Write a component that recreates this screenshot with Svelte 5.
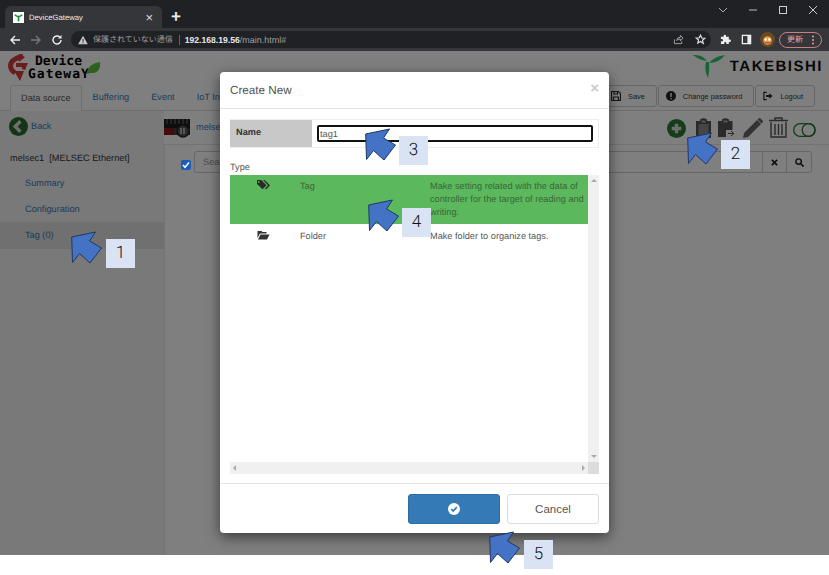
<script>
  const callouts = [
    { n: 1, ax: 71, ay: 231, bx: 106, by: 239 },
    { n: 2, ax: 687, ay: 132, bx: 721, by: 140 },
    { n: 3, ax: 365, ay: 128, bx: 399, by: 136 },
    { n: 4, ax: 368, ay: 199, bx: 402, by: 208 },
    { n: 5, ax: 489, ay: 531, bx: 524, by: 540 }
  ];
  const tabs = ['Buffering', 'Event', 'IoT In'];
</script>

<div class="app">
  <!-- browser chrome -->
  <div class="titlebar">
    <div class="tab">
      <svg class="favicon" viewBox="0 0 12 12"><rect width="12" height="12" fill="#fff" /><path d="M2 3q2 2 4 2t4-2M6 5v5" stroke="#1d8a3c" stroke-width="1.8" fill="none" /></svg>
      <span class="tab-title">DeviceGateway</span>
      <span class="tab-close">×</span>
    </div>
    <span class="newtab">+</span>
    <div class="winctl">
      <svg viewBox="0 0 10 10"><path d="M1 3l4 4 4-4" stroke="#aaa" fill="none" /></svg>
      <svg viewBox="0 0 10 10"><path d="M1 5h8" stroke="#bbb" fill="none" /></svg>
      <svg viewBox="0 0 10 10"><rect x="1.5" y="1.5" width="7" height="7" stroke="#ccc" fill="none" /></svg>
      <svg viewBox="0 0 10 10"><path d="M1 1l8 8M9 1l-8 8" stroke="#ccc" fill="none" /></svg>
    </div>
  </div>
  <div class="toolbar">
    <svg class="nav" viewBox="0 0 12 12"><path d="M11 6H2M6 2L2 6l4 4" stroke="#eee" stroke-width="1.4" fill="none" /></svg>
    <svg class="nav" viewBox="0 0 12 12"><path d="M1 6h9M6 2l4 4-4 4" stroke="#777" stroke-width="1.4" fill="none" /></svg>
    <svg class="nav" viewBox="0 0 12 12"><path d="M10 6a4 4 0 1 1-1.2-2.9" stroke="#eee" stroke-width="1.4" fill="none" /><path d="M10.5 1v3.4H7z" fill="#eee" /></svg>
    <div class="omnibox">
      <svg class="warn" viewBox="0 0 10 10"><path d="M5 .8L9.800 9.200H.2z" fill="#c4c7c5" /><path d="M5 4v2.600M5 7.200v1" stroke="#2a2b2e" /></svg>
      <span class="insecure">保護されていない通信</span>
      <span class="sep"></span>
      <span class="url"><b>192.168.19.56</b>/main.html#</span>
      <svg class="omni-ico share" viewBox="0 0 12 12"><path d="M1.500 6v4.500h8V8M4 7q.5-3.500 4-3.500V1.500l3 3-3 3V5.600Q5.500 5.500 4 7z" stroke="#aaa" fill="none" /></svg>
      <svg class="omni-ico star" viewBox="0 0 12 12"><path d="M6 1.300l1.400 3.100 3.300.3-2.500 2.200.8 3.300L6 8.200 3 9.900l.8-3.300-2.500-2.200 3.300-.3z" stroke="#ddd" stroke-width="1.300" fill="none" /></svg>
    </div>
    <svg class="tool-ico puzzle" viewBox="0 0 12 12"><path d="M1 3h3V2a1.300 1.300 0 0 1 2.600 0v1h3v3h1a1.300 1.300 0 0 1 0 2.600h-1V11H7V10a1.200 1.200 0 0 0-2.400 0v1H1V8h1a1.300 1.300 0 0 0 0-2.600H1z" fill="#eee" /></svg>
    <svg class="tool-ico panel-ico" viewBox="0 0 12 12"><rect x="1.500" y="1.500" width="9" height="9" fill="none" stroke="#eee" stroke-width="1.400" /><rect x="7" y="1.500" width="3.500" height="9" fill="#eee" /></svg>
    <svg class="avatar" viewBox="0 0 16 16"><circle cx="8" cy="8" r="8" fill="#6b4a22" /><circle cx="8" cy="9" r="4.500" fill="#e0a050" /><circle cx="6" cy="8" r="1.300" fill="#fff" /><circle cx="10" cy="8" r="1.300" fill="#fff" /><path d="M5 11.500h6" stroke="#a33" /></svg>
    <div class="update"><span>更新</span><i></i></div>
  </div>

  <!-- device gateway page -->
  <div class="page">
    <div class="brand">
      <div class="dg-logo">
        <svg class="dg-mark" viewBox="0 0 22 27">
          <path d="M16 2Q4 5 3.500 11.500Q3.500 16 8 19" stroke="#d43a3a" stroke-width="5" fill="none" />
          <path d="M12 0l6 3-6 5zM9 9h12l-3 7-3-1v-2H9zM7 17h10l-4 10z" fill="#d43a3a" />
        </svg>
        <div class="dg-text"><span>Device</span><span class="gw">GatewaY</span></div>
        <svg class="dg-leaf" viewBox="0 0 14 13"><path d="M0 12Q0 2 13 0Q14 12 3 11z" fill="#5cc23a" /></svg>
      </div>
      <div class="tk-logo">
        <svg class="tk-mark" viewBox="0 0 33 25">
          <path d="M0 1Q9 0 14 7Q6 6 0 1zM32 1Q22 2 16 9Q26 9 32 1zM13 8Q11 16 15 24Q17 16 16 8z" fill="#28c868" />
        </svg>
        <span>TAKEBISHI</span>
      </div>
    </div>

    <div class="tabrow">
      <span class="navtab active">Data source</span>
      {#each tabs as t}
        <span class="navtab">{t}</span>
      {/each}
      <div class="actions">
        <button class="act">
          <svg viewBox="0 0 10 10"><path d="M.5.500h7l2 2v7h-9zM3 .500V3h3.500V.500M2.500 9.500V6h5v3.500" fill="none" stroke="#333" stroke-width="1.200" /></svg>
          Save
        </button>
        <button class="act">
          <svg viewBox="0 0 10 10"><circle cx="5" cy="5" r="5" fill="#222" /><path d="M5 2v4M5 7v1.200" stroke="#fff" stroke-width="1.400" /></svg>
          Change password
        </button>
        <button class="act">
          <svg viewBox="0 0 11 10"><path d="M4 1H1v8h3" fill="none" stroke="#222" stroke-width="1.300" /><path d="M3.500 4h3.500V2l3.500 3L7 8V6H3.500z" fill="#222" /></svg>
          Logout
        </button>
      </div>
    </div>

    <div class="main">
      <aside class="sidebar">
        <div class="back">
          <svg viewBox="0 0 20 20"><circle cx="10" cy="10" r="10" fill="#2a6b2e" /><path d="M12 4.500L6.500 10l5.500 5.500" stroke="#ddd" stroke-width="3.500" fill="none" /></svg>
          <span>Back</span>
        </div>
        <div class="device">melsec1&nbsp; [MELSEC Ethernet]</div>
        <div class="side-item">Summary</div>
        <div class="side-item">Configuration</div>
        <div class="side-item current">Tag (0)</div>
      </aside>
      <section class="content">
        <div class="crumb">
          <svg class="plc" viewBox="0 0 27 20"><rect y="1" width="26" height="9" fill="#1c1c1c" /><rect y="10" width="26" height="7" fill="#444" /><rect y="10" width="10" height="7" fill="#8a1616" /><path d="M3 1v5M7 1v5M11 1v5M15 1v5M19 1v5M23 1v5" stroke="#777" /><circle cx="19" cy="13" r="6" fill="#555" stroke="#222" stroke-width="1.500" /><path d="M17 10v6M20 10v6" stroke="#ccc" stroke-width="1.500" /></svg>
          <span class="crumb-name">melsec1</span>
          <div class="ops">
            <svg class="op-plus" viewBox="0 0 20 20"><circle cx="10" cy="10" r="10" fill="#2a7a34" /><path d="M10 5v10M5 10h10" stroke="#ddd" stroke-width="3.500" /></svg>
            <svg class="op-clip" viewBox="0 0 15 20"><path d="M0 3h4V1.500Q7.500-1 11 1.500V3h4v17H0z" fill="#555" /><path d="M2.500 6h10v11h-10z" fill="#8a8a8a" /><path d="M5.500 2.500h4v2h-4z" fill="#aaa" /></svg>
            <svg class="op-clip2" viewBox="0 0 18 20"><path d="M0 3h4V1.500Q7.500-1 11 1.500V3h3.500v9H8v7H0z" fill="#555" /><path d="M5.500 2.500h4v2h-4z" fill="#aaa" /><path d="M10 15.500h5M13 13l3 2.500-3 2.500" stroke="#555" fill="none" /></svg>
            <svg class="op-pen" viewBox="0 0 20 20"><path d="M0 20l1-5L14 2l4 4L5 19zM15.500 .5q1-1 2 0l2 2q1 1 0 2l-1 1-4-4z" fill="#666" /></svg>
            <svg class="op-trash" viewBox="0 0 19 21"><path d="M6 3V1h7v2M0 3.500h19M2 5v15h15V5M6 7v11M9.500 7v11M13 7v11" fill="none" stroke="#555" stroke-width="1.400" /></svg>
            <svg class="op-toggle" viewBox="0 0 23 14"><rect x=".7" y=".7" width="21.600" height="12.600" rx="6.300" fill="none" stroke="#2a7a34" stroke-width="1.300" /><circle cx="15.500" cy="7" r="6.300" fill="none" stroke="#2a7a34" stroke-width="1.300" /></svg>
          </div>
        </div>
        <div class="panel">
          <span class="check"><svg viewBox="0 0 10 10"><path d="M2 5l2 2.300L8 2.500" stroke="#fff" stroke-width="1.500" fill="none" /></svg></span>
          <div class="search">
            <span class="search-field">Search</span>
            <span class="search-btn"><svg viewBox="0 0 8 8"><path d="M1 1l6 6M7 1L1 7" stroke="#222" stroke-width="2" /></svg></span>
            <span class="search-btn wide"><svg viewBox="0 0 10 10"><circle cx="4" cy="4" r="3" fill="none" stroke="#222" stroke-width="1.600" /><path d="M6.500 6.500L9.500 9.500" stroke="#222" stroke-width="1.800" /></svg></span>
          </div>
        </div>
      </section>
    </div>

    <div class="backdrop"></div>

    <div class="modal">
      <header class="modal-head">
        <h4>Create New</h4>
        <span class="close">×</span>
      </header>
      <div class="modal-body">
        <div class="name-row">
          <label for="tagname">Name</label>
          <div class="name-cell"><input id="tagname" value="tag1" /></div>
        </div>
        <div class="type-label">Type</div>
        <div class="type-box">
          <div class="type-list">
            <div class="type-row selected">
              <span class="ico"><svg viewBox="0 0 13 10"><path d="M0 0h4.200L9.500 5.300 5.500 9.300 0 4zM1.800 1.200a.8.8 0 1 0 .01 0z" fill="#2b2b2b" fill-rule="evenodd" /><path d="M6 0h1.500L13 5.300 9 9.500 8 8.500l3-3.200z" fill="#2b2b2b" /></svg></span>
              <span>Tag</span>
              <span class="desc">Make setting related with the data of controller for the target of reading and writing.</span>
            </div>
            <div class="type-row">
              <span class="ico"><svg viewBox="0 0 12 10"><path d="M0 1h4l1 1h4v1.500H2.500L0 8zM3 4.500h9L9.500 9.500H.5z" fill="#333" /></svg></span>
              <span>Folder</span>
              <span class="desc">Make folder to organize tags.</span>
            </div>
          </div>
          <div class="vbar"><i class="up"></i><i class="down"></i></div>
          <div class="hbar"><i class="left"></i><i class="right"></i></div>
          <div class="corner"></div>
        </div>
      </div>
      <footer class="modal-foot">
        <button class="btn primary" aria-label="OK"><svg viewBox="0 0 12 12"><circle cx="6" cy="6" r="6" fill="#fff" /><path d="M3.200 6l2 2 3.600-3.800" stroke="#337ab7" stroke-width="1.700" fill="none" /></svg></button>
        <button class="btn">Cancel</button>
      </footer>
    </div>
  </div>

  {#each callouts as c}
    <svg class="arrow" style="left:{c.ax}px;top:{c.ay}px" viewBox="0 0 32 33">
      <path d="M24.500 1L.7 6 1.500 31.500 8.500 22.500 19 32 30.500 17 18.500 10z" fill="#4472c4" stroke="#1f3864" stroke-width="1" />
    </svg>
    <span class="badge" style="left:{c.bx}px;top:{c.by}px">{c.n}</span>
  {/each}
</div>

<style>
  :global(body) {
    margin: 0;
    background: #fff;
  }
  .app {
    position: relative;
    width: 829px;
    height: 575px;
    overflow: hidden;
    font-family: 'Liberation Sans', Arial, sans-serif;
    font-size: 9.2px;
    text-rendering: geometricPrecision;
    color: #333;
  }

  /* browser chrome */
  .titlebar {
    height: 28px;
    background: #202124;
    display: flex;
    align-items: flex-end;
    padding-left: 5px;
    box-sizing: border-box;
  }
  .tab {
    width: 157px;
    height: 22px;
    box-sizing: border-box;
    background: #35363a;
    border-radius: 6px 6px 0 0;
    display: flex;
    align-items: center;
    padding: 0 8px;
    gap: 5px;
    color: #e8eaed;
    font-size: 7.7px;
  }
  .favicon {
    width: 11px;
    height: 11px;
  }
  .tab-title {
    flex: 1;
  }
  .tab-close {
    font-size: 13px;
    color: #ddd;
    margin-right: 1px;
  }
  .newtab {
    color: #eee;
    font-size: 17px;
    line-height: 22px;
    margin-left: 9px;
    font-weight: bold;
  }
  .winctl {
    margin-left: auto;
    align-self: flex-start;
    display: flex;
    gap: 20px;
    padding: 5px 11px 0 0;
  }
  .winctl svg {
    width: 10px;
    height: 10px;
  }
  .toolbar {
    height: 23px;
    background: #35363a;
    display: flex;
    align-items: center;
    padding: 0 6px 0 9px;
    box-sizing: border-box;
  }
  .nav {
    width: 12px;
    height: 12px;
    margin-right: 9px;
  }
  .omnibox {
    margin-left: -1px;
    width: 640px;
    height: 17px;
    flex: none;
    background: #202124;
    border-radius: 9px;
    display: flex;
    align-items: center;
    padding-left: 7px;
    box-sizing: border-box;
  }
  .warn {
    width: 10px;
    height: 10px;
  }
  .insecure {
    font-family: 'Noto Sans CJK JP', sans-serif;
    font-size: 8px;
    color: #9aa0a6;
    margin-left: 5px;
  }
  .sep {
    width: 1px;
    height: 10px;
    background: #5f6368;
    margin: 0 5px 0 6px;
  }
  .url {
    color: #9aa0a6;
    font-size: 9px;
  }
  .url b {
    color: #e8eaed;
    font-size: 8.6px;
    font-weight: bold;
  }
  .omni-ico {
    width: 11px;
    height: 11px;
  }
  .share {
    margin-left: auto;
    margin-right: 11px;
  }
  .star {
    margin-right: 5px;
  }
  .tool-ico {
    width: 11px;
    height: 11px;
  }
  .puzzle {
    margin-left: 9px;
  }
  .panel-ico {
    margin-left: 10px;
  }
  .avatar {
    width: 15px;
    height: 15px;
    margin-left: 8px;
  }
  .update {
    width: 43px;
    height: 16px;
    box-sizing: border-box;
    margin-left: 4px;
    border: 1px solid #c98080;
    border-radius: 8px;
    display: flex;
    align-items: center;
    padding-left: 7px;
    color: #e8a0a0;
    font-family: 'Noto Sans CJK JP', sans-serif;
    font-size: 8px;
  }
  .update i {
    margin-left: 9px;
    width: 2px;
    height: 2px;
    background: #e8a0a0;
    border-radius: 50%;
    box-shadow: 0 -3.500px 0 #e8a0a0, 0 3.500px 0 #e8a0a0;
  }

  /* page */
  .page {
    position: relative;
    height: 504px;
    background: #fff;
  }
  .brand {
    height: 34px;
    display: flex;
    justify-content: space-between;
    align-items: flex-start;
    padding: 3px 6px 0 7px;
    box-sizing: border-box;
  }
  .dg-logo {
    display: flex;
    position: relative;
  }
  .dg-mark {
    width: 22px;
    height: 27px;
  }
  .dg-text {
    display: flex;
    flex-direction: column;
    font-family: 'DejaVu Sans Mono', monospace;
    font-weight: bold;
    font-size: 13px;
    line-height: 13px;
    color: #000;
    padding-top: 1px;
    margin-left: 6px;
  }
  .dg-text .gw {
    margin-left: -7px;
    letter-spacing: 1px;
  }
  .dg-leaf {
    position: absolute;
    left: 80px;
    top: 8px;
    width: 14px;
    height: 13px;
  }
  .tk-logo {
    display: flex;
    gap: 4px;
    align-items: flex-start;
    font-weight: bold;
    font-size: 15px;
    letter-spacing: 1.500px;
    color: #111;
  }
  .tk-logo span {
    margin-top: 5px;
    line-height: 16px;
  }
  .tk-mark {
    width: 33px;
    height: 25px;
  }
  .tabrow {
    height: 26px;
    box-sizing: border-box;
    display: flex;
    align-items: flex-end;
    padding-left: 10px;
    border-bottom: 1px solid #ddd;
  }
  .navtab {
    height: 25px;
    line-height: 25px;
    padding: 0 11px;
    color: #337ab7;
    white-space: nowrap;
  }
  .navtab.active {
    color: #555;
    border: 1px solid #ddd;
    border-bottom: 0;
    border-radius: 3px 3px 0 0;
    background: #fff;
    padding: 0 10px;
    margin-bottom: -1px;
    box-sizing: content-box;
  }
  .actions {
    margin-left: auto;
    margin-right: 14px;
    align-self: flex-start;
    display: flex;
    gap: 1px;
  }
  .act {
    height: 22px;
    padding: 0 11px 0 7px;
    border: 1px solid #ccc;
    border-radius: 3px;
    background: #fff;
    display: flex;
    align-items: center;
    gap: 7px;
    font: 7.4px 'Liberation Sans', Arial, sans-serif;
    color: #333;
  }
  .act svg {
    width: 10px;
    height: 10px;
  }
  .main {
    display: flex;
    height: 444px;
  }
  .sidebar {
    width: 164px;
    background: #f2f2f2;
    flex: none;
  }
  .back {
    display: flex;
    align-items: center;
    gap: 3px;
    height: 20px;
    padding: 5px 0 0 9px;
    color: #337ab7;
  }
  .back svg {
    width: 19px;
    height: 19px;
  }
  .device {
    margin-top: 16px;
    padding-left: 10px;
    line-height: 12px;
    color: #333;
  }
  .side-item {
    height: 26px;
    line-height: 26px;
    padding-left: 25px;
    color: #337ab7;
  }
  .device + .side-item {
    margin-top: 6px;
  }
  .side-item.current {
    background: #e0e0e0;
    height: 27px;
  }
  .content {
    flex: 1;
    min-width: 0;
    display: flex;
    flex-direction: column;
  }
  .crumb {
    height: 33px;
    display: flex;
    align-items: flex-start;
    box-sizing: border-box;
    padding-top: 7px;
    flex: none;
  }
  .plc {
    width: 27px;
    height: 20px;
  }
  .crumb-name {
    margin: 4px 0 0 5px;
    color: #337ab7;
  }
  .ops {
    margin-left: auto;
    margin-right: 13px;
    display: flex;
    align-items: flex-start;
  }
  .op-plus {
    width: 19px;
    height: 19px;
    margin: 1px 10px 0 0;
  }
  .op-clip {
    width: 15px;
    height: 20px;
    margin-right: 7px;
  }
  .op-clip2 {
    width: 18px;
    height: 20px;
    margin-right: 7px;
  }
  .op-pen {
    width: 20px;
    height: 20px;
    margin-right: 6px;
  }
  .op-trash {
    width: 19px;
    height: 21px;
    margin: -1px 5px 0 0;
  }
  .op-toggle {
    width: 23px;
    height: 14px;
    margin-top: 5px;
  }
  .panel {
    flex: 1;
    border-top: 1px solid #e6e6e6;
    border-left: 1px solid #e6e6e6;
    display: flex;
    align-items: flex-start;
    padding: 6px 17px 0 16px;
  }
  .check {
    width: 10px;
    height: 10px;
    margin-top: 9px;
    margin-right: 3px;
    background: #1a5cb8;
    border-radius: 2px;
    position: relative;
    z-index: 2;
    display: flex;
  }
  .search {
    flex: 1;
    display: flex;
    height: 22px;
    border: 1px solid #ccc;
    border-radius: 3px;
    box-sizing: border-box;
  }
  .search-field {
    flex: 1;
    padding-left: 8px;
    line-height: 20px;
    color: #999;
  }
  .search-btn {
    width: 23px;
    border-left: 1px solid #ccc;
    display: flex;
    align-items: center;
    justify-content: center;
  }
  .search-btn.wide {
    width: 24px;
  }
  .search-btn svg {
    width: 7px;
    height: 7px;
  }
  .search-btn.wide svg {
    width: 9px;
    height: 9px;
  }

  .backdrop {
    position: absolute;
    inset: 0;
    background: rgba(0, 0, 0, 0.5);
  }

  /* modal */
  .modal {
    position: absolute;
    left: 220px;
    top: 21px;
    width: 389px;
    height: 461px;
    background: #fff;
    border-radius: 4px;
    box-shadow: 0 4px 14px rgba(0, 0, 0, 0.55);
    display: flex;
    flex-direction: column;
  }
  .modal-head {
    height: 37px;
    flex: none;
    box-sizing: border-box;
    border-bottom: 1px solid #e5e5e5;
    display: flex;
    align-items: center;
    justify-content: space-between;
    padding: 0 10px;
  }
  .modal-head h4 {
    margin: 0;
    font-size: 11.7px;
    font-weight: normal;
    color: #555;
  }
  .close {
    font-size: 15px;
    font-weight: bold;
    color: #ccc;
    margin-top: -4px;
  }
  .modal-body {
    flex: 1;
    padding: 10px 10px 9px;
    display: flex;
    flex-direction: column;
  }
  .name-row {
    height: 29px;
    display: flex;
    border: 1px solid #eee;
    border-left: 0;
    box-sizing: border-box;
    flex: none;
  }
  .name-row label {
    width: 82px;
    background: #c8c8c8;
    box-sizing: border-box;
    padding: 0 0 0 6px;
    line-height: 24px;
    font-weight: bold;
    color: #333;
  }
  .name-cell {
    flex: 1;
    padding: 5px 5px 0 5px;
  }
  .name-cell input {
    display: block;
    width: 100%;
    height: 17px;
    box-sizing: border-box;
    border: 2px solid #111;
    border-radius: 2px;
    padding: 0 0 0 1px;
    outline: none;
    font: 9.2px 'Liberation Sans', Arial, sans-serif;
    color: #555;
  }
  .type-label {
    margin-top: 13px;
    height: 14px;
    line-height: 12px;
    color: #555;
  }
  .type-box {
    flex: 1;
    display: grid;
    grid-template-columns: 1fr 11px;
    grid-template-rows: 1fr 12px;
  }
  .type-list {
    min-height: 0;
  }
  .type-row {
    display: grid;
    grid-template-columns: 70px 130px 1fr;
    padding: 6px 0 5px;
    line-height: 13px;
    color: #555;
  }
  .type-row .ico {
    padding-left: 27px;
  }
  .ico svg {
    width: 13px;
    height: 10px;
    display: block;
  }
  .type-row.selected {
    background: #5cb85c;
    color: #38663a;
    padding-top: 5px;
    height: 49px;
    box-sizing: border-box;
  }
  .vbar {
    background: #f0f0f0;
    position: relative;
  }
  .hbar {
    background: #f0f0f0;
    position: relative;
  }
  .corner {
    background: #dcdcdc;
  }
  .vbar i,
  .hbar i {
    position: absolute;
    width: 0;
    height: 0;
    border: 3px solid transparent;
  }
  .vbar .up {
    top: 1px;
    left: 2.500px;
    border-bottom-color: #aaa;
  }
  .vbar .down {
    bottom: 1px;
    left: 2.500px;
    border-top-color: #aaa;
  }
  .hbar .left {
    left: 0;
    top: 3px;
    border-right-color: #aaa;
  }
  .hbar .right {
    right: 0;
    top: 3px;
    border-left-color: #aaa;
  }
  .modal-foot {
    height: 50px;
    flex: none;
    box-sizing: border-box;
    border-top: 1px solid #e5e5e5;
    display: flex;
    justify-content: flex-end;
    gap: 7px;
    padding: 10px 10px 0;
  }
  .btn {
    width: 92px;
    height: 30px;
    box-sizing: border-box;
    border: 1px solid #ddd;
    border-radius: 3px;
    background: #fff;
    font: 11.500px 'Liberation Sans', Arial, sans-serif;
    color: #555;
    padding: 0;
  }
  .btn.primary {
    background: #337ab7;
    border-color: #2e6da4;
    display: flex;
    align-items: center;
    justify-content: center;
  }
  .btn svg {
    width: 12px;
    height: 12px;
  }

  /* tutorial annotations */
  .arrow {
    position: absolute;
    width: 32px;
    height: 33px;
  }
  .badge {
    position: absolute;
    width: 29px;
    height: 29px;
    background: #dae3f3;
    color: #111;
    font-family: Roboto, sans-serif;
    font-weight: 300;
    font-size: 17px;
    line-height: 29px;
    text-align: center;
  }
</style>
